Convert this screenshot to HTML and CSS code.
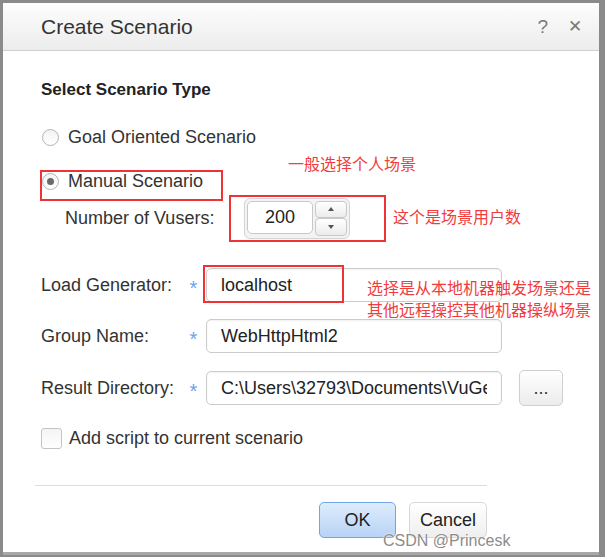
FILE: index.html
```html
<!DOCTYPE html>
<html>
  <head>
    <meta charset="UTF-8">
    <title>Create Scenario</title>
    <link rel="stylesheet" href="styles.css">
  </head>
  <body>
    <div class="dialog">
      <!-- Title bar -->
      <div class="titlebar">
        <span class="title">Create Scenario</span>
        <span class="tools">
          <span class="tool">?</span>
          <span class="tool close">&#x2715;</span>
        </span>
      </div>

      <div class="content">
        <div class="heading">Select Scenario Type</div>

        <div class="radio-row first">
          <span class="radio"></span>
          <span>Goal Oriented Scenario</span>
        </div>
        <div class="radio-row second">
          <span class="radio checked"></span>
          <span>Manual Scenario</span>
        </div>

        <div class="vusers-row">
          <span class="vusers-label">Number of Vusers:</span>
          <div class="spinner">
            <input class="spin-value" type="text" value="200">
            <div class="spin-buttons">
              <span class="spin-btn"><span class="arrow up"></span></span>
              <span class="spin-btn"><span class="arrow down"></span></span>
            </div>
          </div>
        </div>

        <div class="form">
          <div class="field-row">
            <span class="label">Load Generator:</span>
            <span class="req">*</span>
            <input class="field" type="text" value="localhost">
          </div>
          <div class="field-row">
            <span class="label">Group Name:</span>
            <span class="req">*</span>
            <input class="field" type="text" value="WebHttpHtml2">
          </div>
          <div class="field-row">
            <span class="label">Result Directory:</span>
            <span class="req">*</span>
            <input class="field" type="text" value="C:\Users\32793\Documents\VuGen\Scripts\WebHttpHtml2\res">
            <button class="browse">...</button>
          </div>
        </div>

        <div class="check-row">
          <span class="checkbox"></span>
          <span>Add script to current scenario</span>
        </div>
      </div>

      <div class="footer">
        <div class="buttons">
          <button class="btn ok">OK</button>
          <button class="btn">Cancel</button>
        </div>
      </div>
    </div>

    <!-- red notes drawn over the screenshot -->
    <div class="mark mark-manual"></div>
    <div class="mark mark-vusers"></div>
    <div class="mark mark-lg"></div>
    <div class="note note-1">一般选择个人场景</div>
    <div class="note note-2">这个是场景用户数</div>
    <div class="note note-3">选择是从本地机器触发场景还是<br>其他远程操控其他机器操纵场景</div>

    <div class="watermark">CSDN @Princesk</div>
  </body>
</html>
```

FILE: styles.css
```css
body {
  margin: 0;
  width: 605px;
  height: 557px;
  background: #8a8a8a;
  font-family: "Liberation Sans", Arial, sans-serif;
  color: #333;
  position: relative;
  overflow: hidden;
}

.dialog {
  position: absolute;
  left: 3px;
  top: 3px;
  width: 596px;
  height: 549px;
  background: #fff;
  border-bottom: 3px solid #a8a8a8;
}

.titlebar {
  height: 47px;
  border-bottom: 1px solid #cfcfcf;
  background: linear-gradient(#fdfdfd, #ececec);
  display: flex;
  align-items: center;
  justify-content: space-between;
  padding: 0 17px 0 38px;
}

.title {
  font-size: 21px;
  color: #333;
  margin-top: 1px;
}

.tools {
  display: flex;
  gap: 20px;
  color: #7a7a7a;
}

.tool {
  font-size: 19px;
}

.tool.close {
  font-size: 17px;
}

.content {
  padding: 29px 36px 0 38px;
  font-size: 18px;
  color: #333;
}

.heading {
  font-size: 17px;
  font-weight: bold;
  line-height: 20px;
  color: #222;
}

.radio-row {
  display: flex;
  align-items: center;
  gap: 9px;
  height: 24px;
}

.radio-row.first {
  margin-top: 25px;
}

.radio-row.second {
  margin-top: 20px;
}

.radio {
  width: 15px;
  height: 15px;
  margin-left: 1px;
  border-radius: 50%;
  border: 1px solid #b4b4b4;
  background: linear-gradient(#f2f2f2, #ffffff);
  position: relative;
}

.radio.checked::after {
  content: "";
  position: absolute;
  left: 4px;
  top: 4px;
  width: 7px;
  height: 7px;
  border-radius: 50%;
  background: #6a6a6a;
}

.vusers-row {
  display: flex;
  align-items: center;
  margin-top: 5px;
  padding-left: 24px;
  height: 40px;
}

.vusers-label {
  width: 179px;
}

.spinner {
  display: flex;
  width: 100px;
  height: 35px;
  padding: 2px;
  border: 1px solid #d4d4d4;
  border-radius: 6px;
  background: #f3f3f3;
  gap: 2px;
}

.spin-value {
  width: 66px;
  height: 33px;
  box-sizing: border-box;
  border: 1px solid #c8c8c8;
  border-radius: 5px;
  font: 18px "Liberation Sans", Arial, sans-serif;
  color: #222;
  text-align: center;
  padding: 0;
  background: #fff;
}

.spin-buttons {
  display: flex;
  flex-direction: column;
  width: 32px;
}

.spin-btn {
  flex: 1;
  border: 1px solid #c8c8c8;
  border-radius: 4px;
  background: linear-gradient(#ffffff, #ececec);
  display: flex;
  align-items: center;
  justify-content: center;
}

.arrow {
  width: 0;
  height: 0;
  border-left: 3px solid transparent;
  border-right: 3px solid transparent;
}

.arrow.up {
  border-bottom: 4px solid #555;
}

.arrow.down {
  border-top: 4px solid #555;
}

.form {
  margin-top: 30px;
  display: flex;
  flex-direction: column;
  gap: 17px;
}

.field-row {
  display: grid;
  grid-template-columns: 138px 27px 296px 44px;
  column-gap: 0;
  align-items: center;
  height: 34px;
}

.req {
  color: #6aa3ee;
  font-size: 20px;
  text-align: center;
  padding-top: 6px;
  padding-left: 2px;
}

.field {
  height: 34px;
  box-sizing: border-box;
  border: 1px solid #cbcbcb;
  border-radius: 5px;
  padding: 0 14px;
  font: 18px "Liberation Sans", Arial, sans-serif;
  color: #222;
  background: #fff;
  box-shadow: inset 0 1px 2px rgba(0, 0, 0, 0.06);
}

.browse {
  margin-left: 17px;
  width: 44px;
  height: 36px;
  border: 1px solid #cfcfcf;
  border-radius: 5px;
  background: linear-gradient(#ffffff, #ececec);
  font: 18px "Liberation Sans", Arial, sans-serif;
  color: #333;
  padding: 0;
}

.check-row {
  display: flex;
  align-items: center;
  gap: 7px;
  height: 24px;
  margin-top: 22px;
}

.checkbox {
  width: 19px;
  height: 19px;
  border: 1px solid #c4c4c4;
  border-radius: 3px;
  background: linear-gradient(#f4f4f4, #ffffff);
}

.footer {
  margin: 35px 112px 0 32px;
  border-top: 1px solid #dedede;
  padding-top: 16px;
}

.buttons {
  display: flex;
  justify-content: flex-end;
  gap: 13px;
}

.btn {
  height: 36px;
  width: 78px;
  border: 1px solid #d8d8d8;
  border-radius: 5px;
  background: linear-gradient(#ffffff, #eeeeee);
  font: 18px "Liberation Sans", Arial, sans-serif;
  color: #222;
}

.btn.ok {
  width: 77px;
  border: 1px solid #6fa6e6;
  background: linear-gradient(#dfecfc, #b7d3f6);
}

/* annotations */
.mark {
  position: absolute;
  border: 2px solid #ee3236;
}

.mark-manual {
  left: 40px;
  top: 170px;
  width: 179px;
  height: 27px;
}

.mark-vusers {
  left: 229px;
  top: 195px;
  width: 153px;
  height: 43px;
}

.mark-lg {
  left: 203px;
  top: 265px;
  width: 137px;
  height: 34px;
}

.note {
  position: absolute;
  color: #f03c3c;
  font-size: 16px;
  line-height: 22px;
  font-family: "Noto Sans CJK SC", sans-serif;
  white-space: nowrap;
}

.note-1 {
  left: 288px;
  top: 152px;
}

.note-2 {
  left: 393px;
  top: 205px;
}

.note-3 {
  left: 367px;
  top: 276px;
}

.watermark {
  position: absolute;
  left: 383px;
  top: 532px;
  font-size: 16px;
  color: #8c8c8c;
  text-shadow: 0 0 2px #fff, 0 0 1px #fff;
}
```
